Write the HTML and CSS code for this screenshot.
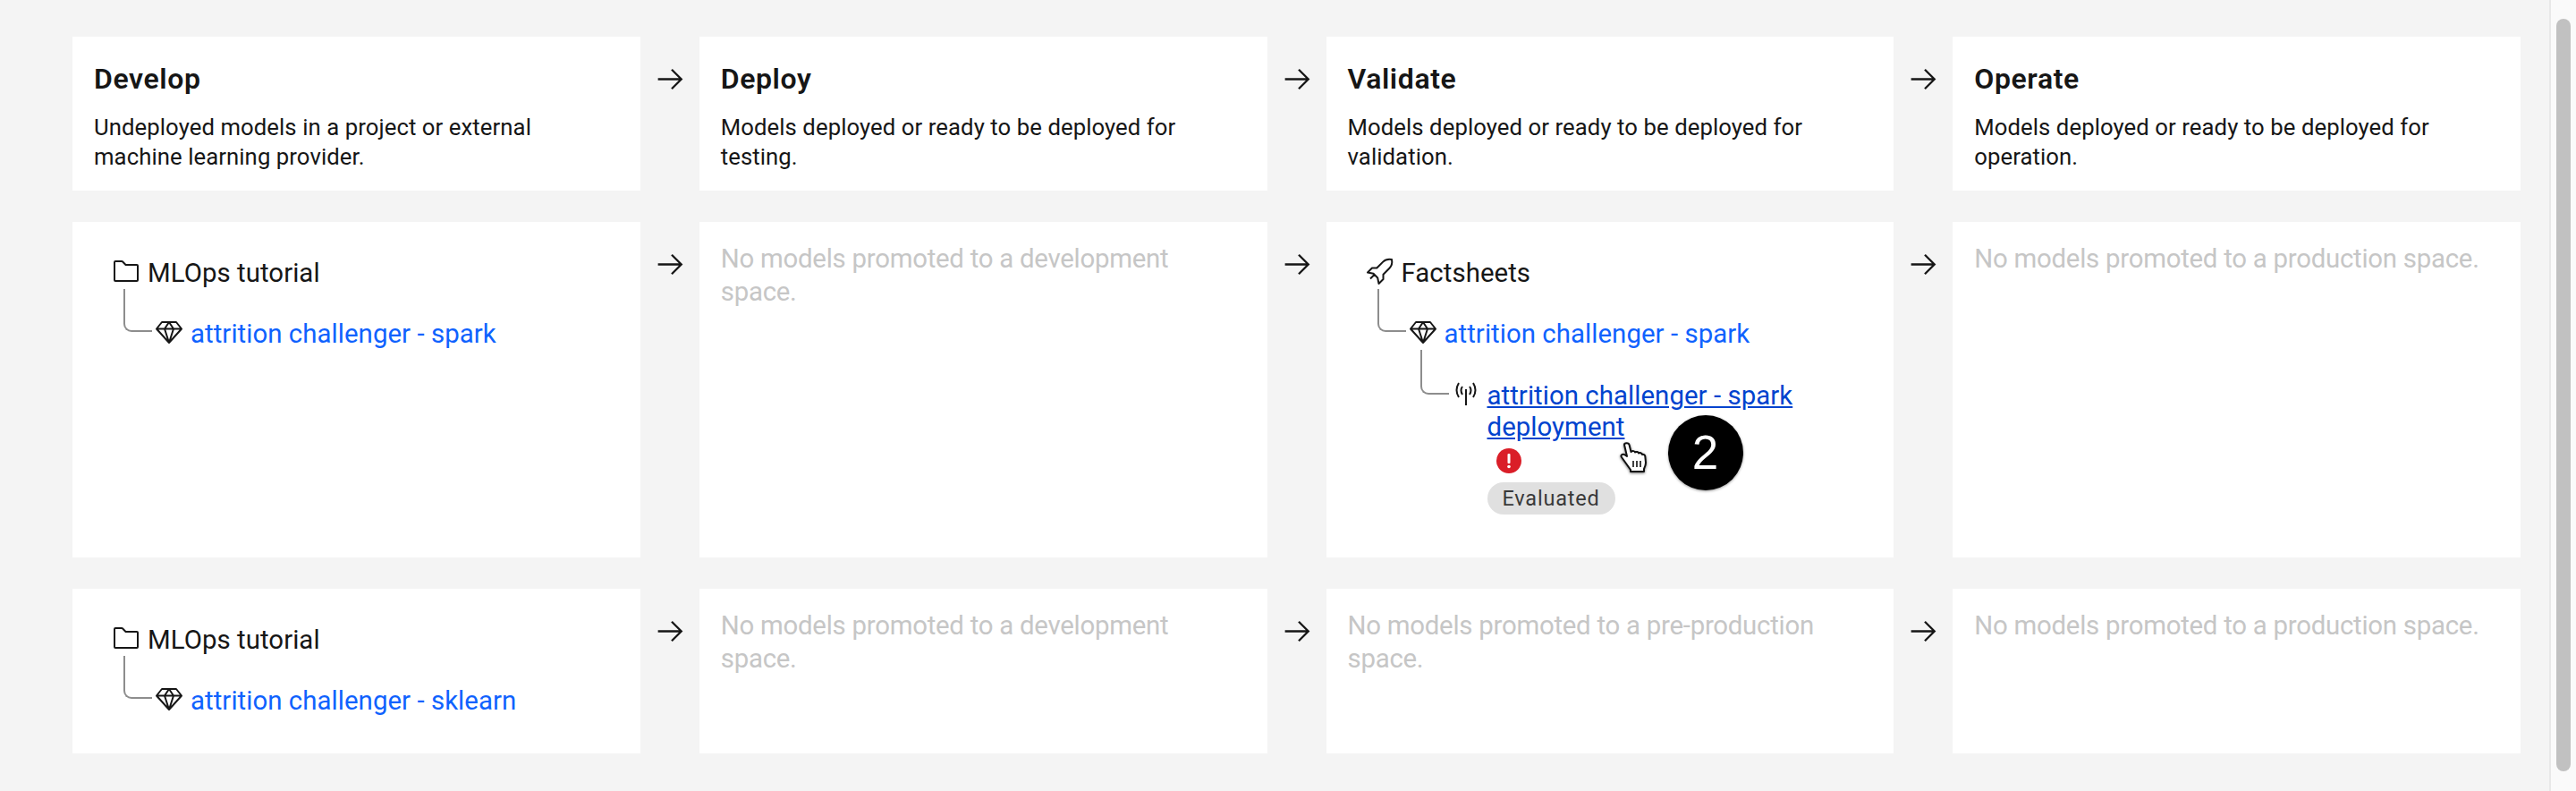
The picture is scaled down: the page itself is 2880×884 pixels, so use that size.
FILE: index.html
```html
<!DOCTYPE html>
<html lang="en">
<head>
<meta charset="utf-8">
<title>MLOps model lifecycle</title>
<link rel="stylesheet" href="styles.css">
</head>
<body>
<svg class="sprites" aria-hidden="true">
  <symbol id="i-arrow" viewBox="0 0 32 32"><path d="M18 6l-1.43 1.393L24.15 15H4v2h20.15l-7.58 7.573L18 26l10-10L18 6z"/></symbol>
  <symbol id="i-folder" viewBox="0 0 32 32"><path d="M11.17 6l3.42 3.41.58.59H28v16H4V6h7.17m0-2H4a2 2 0 0 0-2 2v20a2 2 0 0 0 2 2h24a2 2 0 0 0 2-2V10a2 2 0 0 0-2-2H16l-3.41-3.41A2 2 0 0 0 11.17 4z"/></symbol>
  <symbol id="i-gem" viewBox="0 0 32 32"><path d="M8 5h16l6 7.500L16 28 2 12.500zM2 12.500h28M11 12.500L16 5l5 7.500M11 12.500L16 28l5-15.500" fill="none" stroke="#161616" stroke-width="2" stroke-linejoin="round"/></symbol>
  <symbol id="i-rocket" viewBox="0 0 32 32"><path d="M29 3c-4-.8-7.500.3-9.800 2.600L12.300 12.500H7L2 17.500l6.500 1.300 4.700 4.700L14.500 30l5-5v-5.300l6.900-6.900C28.900 10.300 29.800 7 29 3zM5 24.500l5-5" fill="none" stroke="#161616" stroke-width="2" stroke-linejoin="round"/></symbol>
  <symbol id="i-antenna" viewBox="0 0 24 26"><path d="M12 8v18M4 1Q-1 9 4 17M8 5Q5 9 8 14M20 1q5 8 0 16M16 5q3 4 0 9" fill="none" stroke="#161616" stroke-width="2"/></symbol>
</svg>
<div class="page">
  <main class="board">
    <section class="card head"><h2>Develop</h2><p>Undeployed models in a project or external<br>machine learning provider.</p></section>
    <svg class="arrow"><use href="#i-arrow"/></svg>
    <section class="card head"><h2>Deploy</h2><p>Models deployed or ready to be deployed for<br>testing.</p></section>
    <svg class="arrow"><use href="#i-arrow"/></svg>
    <section class="card head"><h2>Validate</h2><p>Models deployed or ready to be deployed for<br>validation.</p></section>
    <svg class="arrow"><use href="#i-arrow"/></svg>
    <section class="card head"><h2>Operate</h2><p>Models deployed or ready to be deployed for<br>operation.</p></section>

    <section class="card tree-card">
      <div class="node"><svg class="ico"><use href="#i-folder"/></svg><span>MLOps tutorial</span></div>
      <div class="node child"><svg class="ico"><use href="#i-gem"/></svg><a class="link">attrition challenger - spark</a></div>
    </section>
    <svg class="arrow"><use href="#i-arrow"/></svg>
    <section class="card empty"><p>No models promoted to a development<br>space.</p></section>
    <svg class="arrow"><use href="#i-arrow"/></svg>
    <section class="card tree-card">
      <div class="node"><svg class="ico"><use href="#i-rocket"/></svg><span>Factsheets</span></div>
      <div class="node child"><svg class="ico"><use href="#i-gem"/></svg><a class="link">attrition challenger - spark</a></div>
      <div class="node child deep">
        <svg class="antenna"><use href="#i-antenna"/></svg>
        <div class="deploy">
          <a class="link hover">attrition challenger - spark<br>deployment</a>
          <svg class="alert" viewBox="0 0 28 28"><circle cx="14" cy="14" r="14" fill="#da1e28"/><rect x="12.500" y="6" width="3" height="11" rx="1" fill="#fff"/><circle cx="14" cy="20.500" r="1.800" fill="#fff"/></svg>
          <span class="tag">Evaluated</span>
          <svg class="cursor" viewBox="0 0 32 34"><path d="M5 3c0-2.500 5-2.500 5.500 0l2 8c2-1.500 4-1 4.500.5 1.500-1 3.500-.5 4 1 1.500-.8 3.500-.3 4 1.500 1.500-.5 3 .3 3.300 2l.7 7c0 3-1 5-2 7v3H12v-2L2 17c-1.500-2 .5-4 3-3l3 2L5 3z" fill="#fff" stroke="#111" stroke-width="2" stroke-linejoin="round"/><path d="M15 21v7M19 21v7M23 21v7" stroke="#111" stroke-width="1.600"/></svg>
          <span class="badge">2</span>
        </div>
      </div>
    </section>
    <svg class="arrow"><use href="#i-arrow"/></svg>
    <section class="card empty"><p>No models promoted to a production space.</p></section>

    <section class="card tree-card">
      <div class="node"><svg class="ico"><use href="#i-folder"/></svg><span>MLOps tutorial</span></div>
      <div class="node child"><svg class="ico"><use href="#i-gem"/></svg><a class="link">attrition challenger - sklearn</a></div>
    </section>
    <svg class="arrow"><use href="#i-arrow"/></svg>
    <section class="card empty"><p>No models promoted to a development<br>space.</p></section>
    <svg class="arrow"><use href="#i-arrow"/></svg>
    <section class="card empty"><p>No models promoted to a pre-production<br>space.</p></section>
    <svg class="arrow"><use href="#i-arrow"/></svg>
    <section class="card empty"><p>No models promoted to a production space.</p></section>
  </main>
  <aside class="scrollbar"><div class="thumb"></div></aside>
</div>
</body>
</html>
```
FILE: styles.css
```css
* { box-sizing: border-box; }
html, body { margin: 0; height: 884px; overflow: hidden; }
body { background: #f4f4f4; font-family: Roboto, "Noto Sans", sans-serif; color: #161616; }
.sprites { display: none; }
.page { display: flex; height: 884px; }
.board {
  flex: 1; padding: 41px 32px 0 81px;
  display: grid;
  grid-template-columns: 1fr 66px 1fr 66px 1fr 66px 1fr;
  grid-template-rows: 172px 375px 184px;
  row-gap: 35px;
  align-content: start;
}
.card { background: #fff; }
.head { padding: 28px 24px 0; }
.head h2 { margin: 0; font-size: 32px; line-height: 38px; font-weight: 600; letter-spacing: .6px; }
.head p { margin: 19px 0 0; font-size: 25.700px; line-height: 33px; letter-spacing: .08px; }
.arrow { width: 37px; height: 37px; margin: 29px 0 0 15px; fill: #161616; }
.empty { padding: 23px 24px 0; color: #c6c6c6; font-size: 29.400px; line-height: 37px; letter-spacing: -.26px; }
.empty p { margin: 0; }
.tree-card { padding: 39px 0 0 46px; font-size: 29.400px; line-height: 36px; letter-spacing: .05px; }
.node { display: flex; align-items: center; gap: 8px; height: 36px; position: relative; }
.child { margin: 32px 0 0 48px; }
.child::before {
  content: ""; position: absolute; left: -37px; top: -32px; width: 30px; height: 46px;
  border-left: 2px solid #8d8d8d; border-bottom: 2px solid #8d8d8d; border-bottom-left-radius: 9px;
}
.deep { margin: 34px 0 0 96px; align-items: flex-start; gap: 12px; height: auto; }
.deep::before { top: -34px; height: 48px; }
.ico { width: 32px; height: 32px; margin: -4px 0 0 -2px; fill: #161616; flex: none; }
.link { color: #0f62fe; }
.link.hover { color: #0043ce; text-decoration: underline; line-height: 35px; display: block; }
.antenna { width: 24px; height: 26px; margin: 2px 0 0 2px; flex: none; }
.deploy { position: relative; display: flex; flex-direction: column; align-items: flex-start; }
.alert { width: 28px; height: 28px; margin: 6px 0 0 10px; display: block; }
.tag { margin-top: 10px; height: 36px; line-height: 36px; padding: 0 17px; border-radius: 18px; background: #e0e0e0; color: #393939; font-size: 23.500px; letter-spacing: .8px; }
.cursor { position: absolute; left: 148px; top: 69px; width: 32px; height: 34px; filter: drop-shadow(0 1px 1.500px rgba(0,0,0,.55)); }
.badge {
  position: absolute; left: 202px; top: 39px; width: 84px; height: 84px; border-radius: 50%;
  background: #000; color: #fff; font-family: "Liberation Sans", sans-serif; font-size: 53px; line-height: 84px; text-align: center;
  box-shadow: 0 1px 3px rgba(0,0,0,.4);
}
.scrollbar { width: 30px; background: #fafafa; border-left: 2px solid #e8e8e8; padding: 21px 6px 22px; }
.thumb { width: 16px; height: 100%; border-radius: 8px; background: #c1c1c1; }
```
